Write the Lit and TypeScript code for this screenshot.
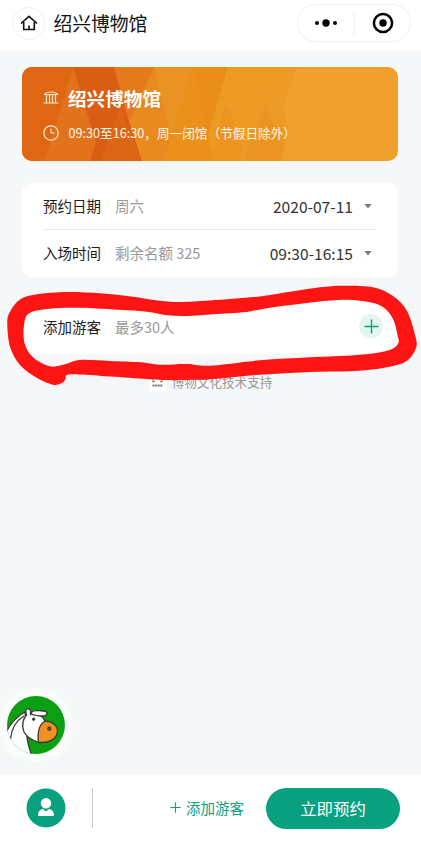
import { LitElement, html, css, svg } from "lit";
import { customElement, property } from "lit/decorators.js";

type Point = [number, number];

/** Closed smooth curve through the points. */
function smooth(points: Point[]): string {
  const n = points.length;
  let d = `M${points[0][0]} ${points[0][1]}`;
  for (let i = 0; i < n; i++) {
    const a = points[(i - 1 + n) % n];
    const b = points[i];
    const c = points[(i + 1) % n];
    const e = points[(i + 2) % n];
    const k = 6;
    d += `C${b[0] + (c[0] - a[0]) / k} ${b[1] + (c[1] - a[1]) / k} ${c[0] - (e[0] - b[0]) / k} ${c[1] - (e[1] - b[1]) / k} ${c[0]} ${c[1]}`;
  }
  return d + "Z";
}

const OUTER: Point[] = [
  [7.3, 323], [10, 311.7], [20, 299.5], [37, 294.3], [67, 292], [100, 293.3], [133, 296.7],
  [160, 300.7], [180, 302], [210, 300.5], [257, 296.7], [290, 291.7], [320, 287.3], [343, 285.7],
  [373, 287.3], [393, 296], [407, 311], [415.5, 336.7], [416, 348], [408, 360], [393, 366],
  [360, 370.7], [310, 372], [260, 374.7], [210, 379.3], [167, 380], [147, 379], [110, 376.5],
  [80, 374.5], [67, 375], [65.5, 379], [62, 383], [53, 384.7], [37, 378], [20, 365], [10, 346.7],
];
const INNER: Point[] = [
  [24.3, 323], [30, 312.7], [50, 308.7], [80, 307.7], [123, 310], [147, 311.7], [167, 315.3],
  [187, 316], [210, 314.5], [243, 312.3], [277, 306.7], [337, 300], [367, 301.7], [383, 307],
  [393, 319], [397.5, 335], [398, 344], [387, 350.7], [357, 355], [310, 357.3], [260, 360.3],
  [210, 365.7], [187, 364], [160, 364.7], [140, 362.3], [110, 361], [80, 360], [65, 364.3],
  [50, 366.3], [33, 357.3], [24.5, 343],
];

const plus = (size: number, width: number) => html`<svg width=${size} height=${size} viewBox="0 0 16 16">
  <path d="M8 .5V15.5M.5 8H15.5" fill="none" stroke="#0ba17f" stroke-width=${width} />
</svg>`;

@customElement("info-row")
class InfoRow extends LitElement {
  @property() label = "";
  @property() note = "";
  @property() value = "";

  static styles = css`
    :host { display: flex; align-items: center; height: 47px; box-sizing: border-box; font-size: 14.5px; white-space: nowrap; }
    .label { color: #1b1b1b; width: 72px; }
    .note { color: #999; flex: 1; }
    .value { color: #333; font-size: 15.6px; margin-right: 11px; }
    .arrow { width: 8px; height: 5px; background: #777; clip-path: polygon(0 0, 100% 0, 50% 100%); margin: -1px 3px 0 0; }
  `;

  render() {
    return html`
      <span class="label">${this.label}</span>
      <span class="note">${this.note}</span>
      ${this.value
        ? html`<span class="value">${this.value}</span><span class="arrow"></span>`
        : html`<slot></slot>`}
    `;
  }
}

@customElement("app-root")
class AppRoot extends LitElement {
  static styles = css`
    :host {
      display: flex; flex-direction: column; position: relative; width: 421px; height: 841px;
      overflow: hidden; background: #f5f7f9; font-family: "Noto Sans CJK SC", sans-serif; line-height: 1.4;
    }
    svg { display: block; flex: none; }
    header { display: flex; align-items: center; height: 51px; flex: none; background: #fff; padding: 0 10px 5px 12px; box-sizing: border-box; }
    .home { display: grid; place-items: center; width: 33px; height: 33px; border: 1px solid #f0f0f0; border-radius: 50%; box-sizing: border-box; }
    .title { font-size: 18.8px; color: #111; margin-left: 8.5px; flex: 1; }
    .capsule { display: flex; align-items: center; width: 114px; height: 38px; border: 1px solid #f0f0f0; border-radius: 19px; box-sizing: border-box; }
    main { flex: 1; padding: 16px 23px 0 22px; display: flex; flex-direction: column; }
    .banner { position: relative; height: 94px; border-radius: 10px; overflow: hidden; flex: none; }
    .pattern { position: absolute; inset: 0; }
    .lines { position: relative; color: #fff; padding: 17px 0 0 21px; }
    .line { display: flex; align-items: center; white-space: nowrap; }
    .name { font-size: 18.6px; font-weight: 700; height: 28px; line-height: 28px; margin-left: 9px; }
    .hours { font-size: 12.65px; height: 20px; line-height: 20px; margin-left: 9.5px; color: #fff6e8; }
    .line + .line { margin-top: 11px; }
    .card { background: #fff; border-radius: 10px; padding: 0 23px 0 21px; flex: none; }
    .times { margin-top: 22px; height: 94px; }
    .times info-row + info-row { border-top: 1px solid #e9e9e9; margin-top: -1px; height: 48px; }
    .visitors { margin-top: 22px; height: 55px; padding: 5px 15px 0 21px; box-sizing: border-box; }
    .add { display: grid; place-items: center; width: 24px; height: 24px; border-radius: 50%; background: #e3f5f1; margin-top: -3px; }
    .support { display: flex; align-items: center; justify-content: center; gap: 6px; font-size: 12.6px; color: #999; margin-top: 19px; height: 18px; padding-left: 1px; }
    .marker { position: absolute; left: 0; top: 0; pointer-events: none; }
    .float { position: absolute; left: -1px; top: 688px; width: 74px; height: 74px; border-radius: 50%; background: #fafbfb; display: grid; place-items: center; }
    footer { display: flex; align-items: center; height: 66px; flex: none; background: #fff; padding: 0 21px 0 26px; box-sizing: border-box; }
    .divider { width: 1px; height: 40px; background: #c9c9c9; margin-left: 26px; }
    .invite { display: flex; align-items: center; gap: 5px; color: #0ba17f; font-size: 14.5px; margin-left: auto; margin-right: 22px; }
    .book { width: 134px; height: 41px; border: 0; padding: 0; border-radius: 21px; background: #07a180; color: #fff; font: 16.4px "Noto Sans CJK SC", sans-serif; }
  `;

  render() {
    return html`
      <header>
        <div class="home">
          <svg width="18" height="18" viewBox="0 0 18 18" fill="none" stroke="#111" stroke-width="1.6">
            <path d="M1 9.500 9 2.300l8 7.200M3.700 8v7.500h10.600V8M9 11.500v4" />
          </svg>
        </div>
        <div class="title">绍兴博物馆</div>
        <div class="capsule">
          <svg width="112" height="36" viewBox="0 0 112 36">
            <circle cx="19" cy="18" r="2" /><circle cx="28" cy="18" r="3.7" /><circle cx="37" cy="18" r="2" />
            <path d="M56 7v23" stroke="#eee" />
            <circle cx="85" cy="18" r="9.1" fill="none" stroke="#000" stroke-width="2.5" />
            <circle cx="85" cy="18" r="3.7" />
          </svg>
        </div>
      </header>

      <main>
        <section class="banner">
          <svg class="pattern" width="376" height="94" viewBox="0 0 376 94">
            <defs>
              <linearGradient id="base">
                <stop offset="0" stop-color="#df6512" /><stop offset=".25" stop-color="#e2721a" />
                <stop offset=".36" stop-color="#e98a1f" /><stop offset=".55" stop-color="#ec981f" />
                <stop offset=".68" stop-color="#f1a12b" /><stop offset="1" stop-color="#f1a12b" />
              </linearGradient>
            </defs>
            <rect width="376" height="94" fill="url(#base)" />
            <path d="M0 0H51L22 94H0z" fill="#df6713" />
            <path d="M39 42 52 0 74 75 68 94H22z" fill="#e2731c" />
            <path d="M51 0H92L120 94H68L74 75z" fill="#d95d13" />
            <path d="M92 0H132L107 55z" fill="#e47a1b" />
            <path d="M107 55 132 0H169L141 94H120z" fill="#e88a1d" />
            <path d="M79 94 98 40 120 94z" fill="#dd6516" />
            <path d="M132 0H171L149 69z" fill="#ea9323" />
            <path d="M171 0 199 94H141z" fill="#ea901b" />
            <path d="M171 0H206L186 68z" fill="#e98e18" />
            <path d="M186 68 206 0H245L267 60 260 94H192z" fill="#ed9a25" />
            <path d="M188 94 204 37 221 80 217 94z" fill="#ea921e" opacity=".7" />
            <path d="M221 94 243 37 262 80 258 94z" fill="#eb9121" opacity=".7" />
            <path d="M241 0H275L254 61z" fill="#ee9b26" />
          </svg>
          <div class="lines">
            <div class="line">
              <svg width="16" height="16" viewBox="0 0 16 16" fill="none" stroke="#ffeacb" stroke-width="1.2">
                <path d="M1.500 4.500C3 2.500 5 2 8 2S13 2.500 14.500 4.500zM3.500 5v8M6.500 5v8M9.500 5v8M12.500 5v8M.5 13h15" />
              </svg>
              <span class="name">绍兴博物馆</span>
            </div>
            <div class="line">
              <svg width="16" height="16" viewBox="0 0 16 16" fill="none" stroke="#ffeacb" stroke-width="1.2">
                <circle cx="8" cy="8" r="7.2" /><path d="M8 3.5V8h3.5" />
              </svg>
              <span class="hours">09:30至16:30，周一闭馆（节假日除外）</span>
            </div>
          </div>
        </section>

        <section class="card times">
          <info-row label="预约日期" note="周六" value="2020-07-11"></info-row>
          <info-row label="入场时间" note="剩余名额 325" value="09:30-16:15"></info-row>
        </section>

        <section class="card visitors">
          <info-row label="添加游客" note="最多30人"><div class="add">${plus(15, 1.5)}</div></info-row>
        </section>

        <div class="support">
          <svg width="17" height="17" viewBox="0 0 17 17">
            <rect width="17" height="17" fill="#fff" />
            <path d="M4 8.500V3h9v5.500M4 7.500h2M11 7.500h2" fill="none" stroke="#777" />
            <path d="M3.500 11.500h10" stroke="#777" stroke-width="2" stroke-dasharray="2 .6" />
          </svg>
          <span>博物文化技术支持</span>
        </div>
      </main>

      <footer>
        <svg width="40" height="40" viewBox="0 0 40 40">
          <circle cx="20" cy="20" r="19.5" fill="#07a180" />
          <circle cx="20" cy="15.3" r="5.2" fill="#fff" />
          <path d="M12 28c0-4 1.500-6.500 5-7l3 2.600 3-2.600c3.500 .5 5 3 5 7z" fill="#fff" />
        </svg>
        <div class="divider"></div>
        <div class="invite">${plus(11, 1.5)}<span>添加游客</span></div>
        <button class="book">立即预约</button>
      </footer>

      <div class="float">
        <svg width="60" height="60" viewBox="0 0 60 60">
          <defs><clipPath id="disc"><circle cx="30" cy="30" r="29" /></clipPath></defs>
          <g clip-path="url(#disc)" stroke="#3a3a34" stroke-width="1.3" stroke-linejoin="round" stroke-linecap="round">
            <rect width="60" height="60" fill="#0b9f12" stroke="none" />
            <path d="M-1 40C3 30 10 22 19 17L21 43C22 49 23 54 26 61H-1z" fill="#fff" />
            <path d="M4.700 43.300C5.500 34 10 26 17.500 21.200" fill="none" />
            <path d="M21 19.500C17 23.500 15.500 30 18 37c2 4 8 8 14.300 10.300L42 47l-3-20.500c-1-3-3-5-6-6.500-4-1.500-8-2-12-.5z" fill="#fff" />
            <path d="M39 26.300C45 25.800 51.500 30 51.500 36c-.5 8-8.500 12.500-19.200 11.300C31.500 39 32 30 39 26.300z" fill="#f08f22" />
            <path d="M25.500 17.500c1-2 4-2 8-1.800 4 .2 7.500 0 7.500 2.300s-1.500 3-4.500 3c-4 0-8-.5-11-2z" fill="#fff" />
            <path d="M20.500 20C19.500 16 19.500 14 21.500 13.800c2-.3 3 .7 3 3v3" fill="#fff" />
            <circle cx="27.700" cy="24.200" r="1" fill="#333" />
            <circle cx="43.300" cy="33.700" r="1.500" fill="#b85f18" />
          </g>
        </svg>
      </div>

      <svg class="marker" width="421" height="400" viewBox="0 0 421 400">
        ${svg`<path d=${smooth(OUTER) + smooth(INNER)} fill="#ff1414" fill-rule="evenodd" />`}
      </svg>
    `;
  }
}
